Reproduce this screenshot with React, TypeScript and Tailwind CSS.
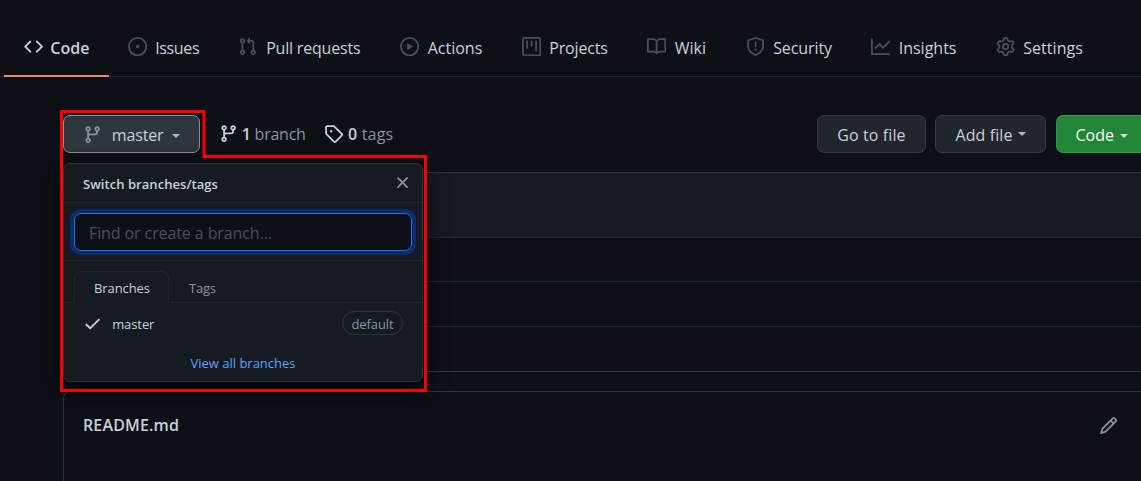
import React from "react";

const paths = {
  code: "M4.72 3.22a.75.75 0 011.06 1.06L2.06 8l3.72 3.72a.75.75 0 11-1.06 1.06L.47 8.53a.75.75 0 010-1.06l4.25-4.25zm6.56 0a.75.75 0 10-1.06 1.06L13.94 8l-3.72 3.72a.75.75 0 101.06 1.06l4.25-4.25a.75.75 0 000-1.06l-4.25-4.25z",
  issue: "M8 9.5a1.5 1.5 0 100-3 1.5 1.5 0 000 3zM8 0a8 8 0 100 16A8 8 0 008 0zM1.5 8a6.5 6.5 0 1113 0 6.5 6.5 0 01-13 0z",
  pull: "M7.177 3.073L9.573.677A.25.25 0 0110 .854v4.792a.25.25 0 01-.427.177L7.177 3.427a.25.25 0 010-.354zM3.75 2.5a.75.75 0 100 1.5.75.75 0 000-1.5zm-2.25.75a2.25 2.25 0 113 2.122v5.256a2.251 2.251 0 11-1.5 0V5.372A2.25 2.25 0 011.5 3.25zM11 2.5h-1V4h1a1 1 0 011 1v5.628a2.251 2.251 0 101.5 0V5A2.5 2.5 0 0011 2.5zm1 10.25a.75.75 0 111.5 0 .75.75 0 01-1.5 0zM3.75 12a.75.75 0 100 1.5.75.75 0 000-1.5z",
  play: "M1.5 8a6.5 6.5 0 1113 0 6.5 6.5 0 01-13 0zM8 0a8 8 0 100 16A8 8 0 008 0zM6.379 5.227A.25.25 0 006 5.442v5.117a.25.25 0 00.379.214l4.264-2.559a.25.25 0 000-.428L6.379 5.227z",
  project: "M1.75 0A1.75 1.75 0 000 1.75v12.5C0 15.216.784 16 1.75 16h12.5A1.75 1.75 0 0016 14.25V1.75A1.75 1.75 0 0014.25 0H1.75zM1.5 1.75a.25.25 0 01.25-.25h12.5a.25.25 0 01.25.25v12.5a.25.25 0 01-.25.25H1.75a.25.25 0 01-.25-.25V1.75zM11.75 3a.75.75 0 00-.75.75v7.5a.75.75 0 001.5 0v-7.5a.75.75 0 00-.75-.75zm-8.25.75a.75.75 0 011.5 0v5.5a.75.75 0 01-1.5 0v-5.5zM8 3a.75.75 0 00-.75.75v3.5a.75.75 0 001.5 0v-3.5A.75.75 0 008 3z",
  book: "M0 1.75A.75.75 0 01.75 1h4.253c1.227 0 2.317.59 3 1.501A3.744 3.744 0 0111.006 1h4.245a.75.75 0 01.75.75v10.5a.75.75 0 01-.75.75h-4.507a2.25 2.25 0 00-1.591.659l-.622.621a.75.75 0 01-1.06 0l-.622-.621A2.25 2.25 0 005.258 13H.75a.75.75 0 01-.75-.75V1.75zm8.755 3a2.25 2.25 0 012.25-2.25H14.5v9h-3.757c-.71 0-1.4.201-1.992.572l.004-7.322zm-1.504 7.324l.004-5.073-.002-2.253A2.25 2.25 0 005.003 2.5H1.5v9h3.757a3.75 3.75 0 011.994.574z",
  shield: "M7.467.133a1.75 1.75 0 011.066 0l5.25 1.68A1.75 1.75 0 0115 3.48V7c0 1.566-.32 3.182-1.303 4.682-.983 1.498-2.585 2.813-5.032 3.855a1.7 1.7 0 01-1.33 0c-2.447-1.042-4.049-2.357-5.032-3.855C1.32 10.182 1 8.566 1 7V3.48a1.75 1.75 0 011.217-1.667l5.25-1.68zm.61 1.429a.25.25 0 00-.153 0l-5.25 1.68a.25.25 0 00-.174.238V7c0 1.358.275 2.666 1.057 3.86.784 1.194 2.121 2.34 4.366 3.297a.2.2 0 00.154 0c2.245-.956 3.582-2.104 4.366-3.298C13.225 9.666 13.5 8.36 13.5 7V3.48a.25.25 0 00-.174-.237l-5.25-1.68zM9 10.5a1 1 0 11-2 0 1 1 0 012 0zm-.25-5.75a.75.75 0 10-1.5 0v3a.75.75 0 001.5 0v-3z",
  graph: "M1.5 1.75a.75.75 0 00-1.5 0v12.5c0 .414.336.75.75.75h14.5a.75.75 0 000-1.5H1.5V1.75zm14.28 2.53a.75.75 0 00-1.06-1.06L10 7.94 7.53 5.47a.75.75 0 00-1.06 0L3.22 8.72a.75.75 0 001.06 1.06L7 7.06l2.47 2.47a.75.75 0 001.06 0l5.25-5.25z",
  gear: "M7.429 1.525a6.593 6.593 0 011.142 0c.036.003.108.036.137.146l.289 1.105c.147.56.55.967.997 1.189.174.086.341.183.501.29.417.278.97.423 1.53.27l1.102-.303c.11-.03.175.016.195.046.219.31.41.641.573.989.014.031.022.11-.059.19l-.815.806c-.411.406-.562.957-.53 1.456a4.588 4.588 0 010 .582c-.032.499.119 1.05.53 1.456l.815.806c.08.08.073.159.059.19a6.494 6.494 0 01-.573.99c-.02.029-.086.074-.195.045l-1.103-.303c-.559-.153-1.112-.008-1.529.27-.16.107-.327.204-.5.29-.449.222-.851.628-.998 1.189l-.289 1.105c-.029.11-.101.143-.137.146a6.613 6.613 0 01-1.142 0c-.036-.003-.108-.037-.137-.146l-.289-1.105c-.147-.56-.55-.967-.997-1.189a4.502 4.502 0 01-.501-.29c-.417-.278-.97-.423-1.53-.27l-1.102.303c-.11.03-.175-.016-.195-.046a6.492 6.492 0 01-.573-.989c-.014-.031-.022-.11.059-.19l.815-.806c.411-.406.562-.957.53-1.456a4.587 4.587 0 010-.582c.032-.499-.119-1.05-.53-1.456l-.815-.806c-.08-.08-.073-.159-.059-.19a6.44 6.44 0 01.573-.99c.02-.029.086-.075.195-.045l1.103.303c.559.153 1.112.008 1.529-.27.16-.107.327-.204.5-.29.449-.222.851-.628.998-1.189l.289-1.105c.029-.11.101-.143.137-.146zM8 0c-.236 0-.47.01-.701.03-.743.065-1.29.615-1.458 1.261l-.29 1.106c-.017.066-.078.158-.211.224a5.994 5.994 0 00-.668.386c-.123.082-.233.09-.3.071L3.27 2.776c-.644-.177-1.392.02-1.82.63a7.977 7.977 0 00-.704 1.217c-.315.675-.111 1.422.363 1.891l.815.806c.05.048.098.147.088.294a6.084 6.084 0 000 .772c.01.147-.038.246-.088.294l-.815.806c-.474.469-.678 1.216-.363 1.891.2.428.436.835.704 1.218.428.609 1.176.806 1.82.63l1.103-.303c.066-.019.176-.011.299.071.213.143.436.272.668.386.133.066.194.158.212.224l.289 1.106c.169.646.715 1.196 1.458 1.26a8.094 8.094 0 001.402 0c.743-.064 1.29-.614 1.458-1.26l.29-1.106c.017-.066.078-.158.211-.224a5.98 5.98 0 00.668-.386c.123-.082.233-.09.3-.071l1.102.302c.644.177 1.392-.02 1.82-.63.268-.382.505-.789.704-1.217.315-.675.111-1.422-.364-1.891l-.814-.806c-.05-.048-.098-.147-.088-.294a6.1 6.1 0 000-.772c-.01-.147.039-.246.088-.294l.814-.806c.475-.469.679-1.216.364-1.891a7.992 7.992 0 00-.704-1.218c-.428-.609-1.176-.806-1.82-.63l-1.103.303c-.066.019-.176.011-.299-.071a5.991 5.991 0 00-.668-.386c-.133-.066-.194-.158-.212-.224L10.16 1.29C9.99.645 9.444.095 8.701.031A8.094 8.094 0 008 0zm1.5 8a1.5 1.5 0 11-3 0 1.5 1.5 0 013 0zM11 8a3 3 0 11-6 0 3 3 0 016 0z",
  branch: "M11.75 2.5a.75.75 0 100 1.5.75.75 0 000-1.5zm-2.25.75a2.25 2.25 0 113 2.122V6A2.5 2.5 0 0110 8.5H6a1 1 0 00-1 1v1.128a2.251 2.251 0 11-1.5 0V5.372a2.25 2.25 0 111.5 0v1.836A2.492 2.492 0 016 7h4a1 1 0 001-1v-.628A2.25 2.25 0 019.5 3.25zM4.25 12a.75.75 0 100 1.5.75.75 0 000-1.5zM3.5 3.25a.75.75 0 111.5 0 .75.75 0 01-1.5 0z",
  tag: "M2.5 7.775V2.75a.25.25 0 01.25-.25h5.025a.25.25 0 01.177.073l6.25 6.25a.25.25 0 010 .354l-5.025 5.025a.25.25 0 01-.354 0l-6.25-6.25a.25.25 0 01-.073-.177zm-1.5 0V2.75C1 1.784 1.784 1 2.75 1h5.025c.464 0 .91.184 1.238.513l6.25 6.25a1.75 1.75 0 010 2.474l-5.026 5.026a1.75 1.75 0 01-2.474 0l-6.25-6.25A1.75 1.75 0 011 7.775zM6 5a1 1 0 100 2 1 1 0 000-2z",
  x: "M3.72 3.72a.75.75 0 011.06 0L8 6.94l3.22-3.22a.75.75 0 111.06 1.06L9.06 8l3.22 3.22a.75.75 0 11-1.06 1.06L8 9.06l-3.22 3.22a.75.75 0 01-1.06-1.06L6.94 8 3.72 4.78a.75.75 0 010-1.06z",
  check: "M13.78 4.22a.75.75 0 010 1.06l-7.25 7.25a.75.75 0 01-1.06 0L2.22 9.28a.75.75 0 011.06-1.06L6 10.94l6.72-6.72a.75.75 0 011.06 0z",
  pencil: "M11.013 1.427a1.75 1.75 0 012.474 0l1.086 1.086a1.75 1.75 0 010 2.474l-8.61 8.61c-.21.21-.47.364-.756.445l-3.251.93a.75.75 0 01-.927-.928l.929-3.25a1.75 1.75 0 01.445-.758l8.61-8.61zm1.414 1.06a.25.25 0 00-.354 0L10.811 3.75l1.439 1.44 1.263-1.263a.25.25 0 000-.354l-1.086-1.086zM11.189 6.25L9.75 4.81l-6.286 6.287a.25.25 0 00-.064.108l-.558 1.953 1.953-.558a.249.249 0 00.108-.064l6.286-6.286z",
};

type IconName = keyof typeof paths;

function Icon({ name, className = "" }: { name: IconName; className?: string }) {
  return (
    <svg viewBox="0 0 16 16" fill="currentColor" fillRule="evenodd" className={`block size-[19.2px] shrink-0 ${className}`}>
      <path d={paths[name]} />
    </svg>
  );
}

function Caret({ className = "" }: { className?: string }) {
  return (
    <span className={`block size-0 shrink-0 border-x-[4.5px] border-t-[4.5px] border-x-transparent ${className}`} />
  );
}

const tabs: { icon: IconName; label: string; width: string; text: string }[] = [
  { icon: "issue", label: "Issues", width: "w-[110px]", text: "ml-2 tracking-[-0.35px]" },
  { icon: "pull", label: "Pull requests", width: "w-[162px]", text: "ml-[9px] tracking-[-0.2px]" },
  { icon: "play", label: "Actions", width: "w-[122px]", text: "ml-[8.5px]" },
  { icon: "project", label: "Projects", width: "w-[125px]", text: "ml-2 tracking-[-0.15px]" },
  { icon: "book", label: "Wiki", width: "w-[99px]", text: "ml-[8.5px]" },
  { icon: "shield", label: "Security", width: "w-[125px]", text: "ml-2 tracking-[-0.1px]" },
  { icon: "graph", label: "Insights", width: "w-[125px]", text: "ml-[8.5px]" },
  { icon: "gear", label: "Settings", width: "w-[127px]", text: "ml-2 tracking-[0.05px]" },
];

function RepoNav() {
  return (
    <nav className="flex h-[77px] items-end border-b border-[#21262d] pl-1">
      <a className="-mb-px flex h-[59px] w-[105px] shrink-0 border-b-2 border-[#f78166] pl-5 text-[#c9d1d9]">
        <Icon name="code" className="mt-[19px]" />
        <span className="mt-[18px] ml-[7px] font-semibold leading-6 tracking-[0.1px]">Code</span>
      </a>
      {tabs.map((t) => (
        <a key={t.label} className={`flex h-[58px] shrink-0 pl-5 ${t.width}`}>
          <Icon name={t.icon} className="mt-[19px] -ml-px text-[#484f58]" />
          <span className={`mt-[18px] whitespace-nowrap leading-6 ${t.text}`}>{t.label}</span>
        </a>
      ))}
    </nav>
  );
}

function BranchMenu() {
  return (
    <div className="absolute top-[48px] left-0 flex h-[219px] w-[360px] flex-col rounded-[7px] border border-[#30363d] bg-[#161b22] text-[13px] shadow-[0_8px_24px_#010409]">
      <div className="flex h-[39px] shrink-0 items-center justify-between border-b border-[#21262d] pr-[10px] pl-[19px]">
        <span className="pt-0.5 text-[13px] font-semibold leading-5 tracking-[0.05px]">Switch branches/tags</span>
        <Icon name="x" className="text-[#8b949e]" />
      </div>
      <div className="h-[58px] shrink-0 border-b border-[#21262d] px-[10px] pt-[10px]">
        <div className="flex h-[38px] items-center rounded-[7px] border border-[#1f6feb] bg-[#0d1117] pt-0.5 pl-[14px] text-base tracking-[-0.1px] text-[#484f58] ring-4 ring-[#0c2d6b]">
          Find or create a branch...
        </div>
      </div>
      <div className="flex h-[42px] shrink-0 items-end border-b border-[#21262d] pl-[10px]">
        <div className="-mb-px flex h-8 w-[95px] items-center rounded-t-[7px] border border-b-0 border-[#21262d] bg-[#161b22] pl-[19px] pt-0.5 tracking-[-0.1px]">
          Branches
        </div>
        <div className="flex h-8 items-center pl-5 pt-1.5 tracking-[-0.2px] text-[#8b949e]">Tags</div>
      </div>
      <div className="flex h-[42px] shrink-0 items-center pr-[19px] pl-[19px]">
        <Icon name="check" />
        <span className="mt-0.5 ml-[10px] grow tracking-[-0.1px]">master</span>
        <span className="-mt-0.5 flex h-6 w-[61px] items-center justify-center rounded-full border border-[#30363d] pt-[3px] tracking-[-0.1px] text-[#8b949e]">
          default
        </span>
      </div>
      <div className="mt-2 flex justify-center leading-5 text-[#58a6ff]">View all branches</div>
    </div>
  );
}

function Toolbar() {
  return (
    <div className="flex h-[38px] shrink-0 items-center">
      <div className="relative z-10">
        <button className="flex h-[38px] w-[137px] items-center rounded-[7px] border border-[#8b949e] bg-[#30363d] pl-[19px]">
          <Icon name="branch" className="mt-0.5 text-[#8b949e]" />
          <span className="ml-[9.6px] mt-0.5 w-[51px] tracking-[-0.15px]">master</span>
          <Caret className="ml-[9px] mt-1 border-t-[#b1b8c0]" />
        </button>
        <BranchMenu />
      </div>
      <Icon name="branch" className="ml-[18.6px]" />
      <span className="ml-[4px] w-[82px] whitespace-nowrap tracking-[-0.25px] text-[#8b949e]">
        <b className="font-semibold text-[#c9d1d9]">1</b> branch
      </span>
      <Icon name="tag" />
      <span className="ml-[5px] grow whitespace-nowrap tracking-[0.2px] text-[#8b949e]">
        <b className="font-semibold text-[#c9d1d9]">0</b> tags
      </span>
      <button className="flex h-[38px] w-[109px] items-center justify-center rounded-[7px] border border-[#363b42] bg-[#21262d] pt-0.5 tracking-[0.1px]">
        Go to file
      </button>
      <button className="ml-[9px] flex h-[38px] w-[111px] items-center rounded-[7px] border border-[#363b42] bg-[#21262d] pl-[19.5px]">
        <span className="mt-0.5 w-[57.5px] text-left tracking-[0.1px]">Add file</span>
        <Caret className="ml-[5px] -mt-px border-t-[#b1b8c0]" />
      </button>
      <button className="ml-[10px] flex h-[38px] w-[85px] items-center rounded-l-[7px] border border-r-0 border-[#359246] bg-[#238636] pl-[18.5px] text-white">
        <span className="mt-0.5 w-[39.5px] text-left">Code</span>
        <Caret className="ml-[5px] mt-1 border-t-[#c4e3ca]" />
      </button>
    </div>
  );
}

export default function App() {
  return (
    <div className="relative flex h-[481px] w-[1141px] flex-col overflow-hidden bg-[#0d1117] font-['Open_Sans','Noto_Sans',sans-serif] text-base text-[#c9d1d9]">
      <RepoNav />
      <main className="flex grow flex-col pt-[38px] pl-[63px]">
        <Toolbar />
        <section className="mt-[19px] flex h-[200px] shrink-0 flex-col overflow-hidden rounded-l-[7px] border border-r-0 border-[#30363d]">
          <div className="h-[65px] border-b border-[#21262d] bg-[#161b22]" />
          <div className="h-[44px] border-b border-[#21262d]" />
          <div className="h-[45px] border-b border-[#21262d]" />
        </section>
        <section className="mt-[19px] flex grow items-start justify-between rounded-tl-[7px] border-t border-l border-[#30363d] pt-[21px] pr-[23px] pl-[19px]">
          <h2 className="font-semibold leading-6 tracking-[0.15px]">README.md</h2>
          <Icon name="pencil" className="mt-[3px] text-[#8b949e]" />
        </section>
      </main>
      <svg viewBox="0 0 1141 481" fill="none" className="pointer-events-none absolute inset-0 z-20 size-full">
        <path d="M61.5 111.5H204V156.5H425.5V390.5H61.5Z" stroke="#ff0000" strokeWidth="3" />
      </svg>
    </div>
  );
}
